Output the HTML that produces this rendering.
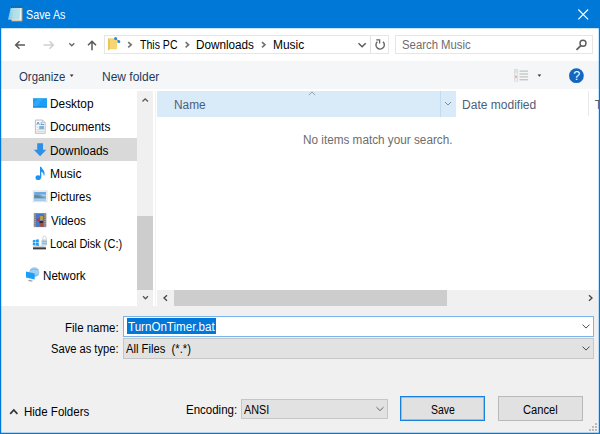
<!DOCTYPE html>
<html><head><meta charset="utf-8">
<style>
*{box-sizing:border-box;margin:0;padding:0}
html,body{width:600px;height:434px;overflow:hidden;background:#fff}
body{font-family:"Liberation Sans",sans-serif;font-size:12.5px;color:#000;position:relative}
.abs{position:absolute}
.txt{position:absolute;transform-origin:0 0;white-space:nowrap;line-height:14px;font-size:12.5px}
#ov{position:absolute;left:0;top:0}
</style></head><body>
<!-- title bar -->
<div class="abs" style="left:0;top:0;width:600px;height:28px;background:#0078d7"></div>
<!-- toolbar bg -->
<div class="abs" style="left:1px;top:61px;width:598px;height:28px;background:#f5f6f7"></div>
<!-- address box -->
<div class="abs" style="left:104px;top:35px;width:285px;height:19px;border:1px solid #e6e6e6;background:#fff"></div>
<div class="abs" style="left:370px;top:36px;width:1px;height:17px;background:#e2e2e2"></div>
<!-- search box -->
<div class="abs" style="left:395px;top:35px;width:198px;height:19px;border:1px solid #e6e6e6;background:#fff"></div>
<!-- left pane selection -->
<div class="abs" style="left:1px;top:138px;width:136px;height:23px;background:#d9d9d9"></div>
<!-- v scrollbar -->
<div class="abs" style="left:137px;top:91px;width:16px;height:215px;background:#f0f0f0"></div>
<div class="abs" style="left:137px;top:215.5px;width:16px;height:74px;background:#cdcdcd"></div>
<div class="abs" style="left:155px;top:91px;width:1px;height:215px;background:#f2f2f2"></div>
<!-- header -->
<div class="abs" style="left:157px;top:91px;width:299px;height:25.5px;background:#d9ebf9"></div>
<div class="abs" style="left:440px;top:91px;width:1px;height:25.5px;background:#c3dbee"></div>
<div class="abs" style="left:588px;top:91px;width:1px;height:25px;background:#e8e8e8"></div>
<!-- h scrollbar -->
<div class="abs" style="left:157px;top:290px;width:442px;height:16px;background:#f0f0f0"></div>
<div class="abs" style="left:174px;top:290px;width:273px;height:16px;background:#cdcdcd"></div>
<!-- bottom panel -->
<div class="abs" style="left:1px;top:306px;width:598px;height:127px;background:#f0f0f0"></div>
<!-- file name box -->
<div class="abs" style="left:123px;top:316px;width:471px;height:21px;border:1px solid #7ab4ee;background:#fff"></div>
<div class="abs" style="left:127px;top:318.3px;width:89px;height:16px;background:#0078d7"></div>
<!-- type box -->
<div class="abs" style="left:123px;top:338px;width:471px;height:20.5px;border:1px solid #c6c6c6;background:#e2e2e2"></div>
<!-- encoding box -->
<div class="abs" style="left:241px;top:398.5px;width:147px;height:20.5px;border:1px solid #c6c6c6;background:#e2e2e2"></div>
<!-- buttons -->
<div class="abs" style="left:400px;top:396px;width:85px;height:25px;border:1px solid #1a80da;box-shadow:inset 0 0 0 1px rgba(0,120,215,0.33);background:#e1e1e1"></div>
<div class="abs" style="left:498px;top:396px;width:85px;height:25px;border:1px solid #b9b9b9;background:#e1e1e1"></div>
<!-- window borders -->
<div class="abs" style="left:0;top:0;width:1px;height:434px;background:#0078d7"></div>
<div class="abs" style="left:599px;top:0;width:1px;height:434px;background:#0078d7"></div>
<div class="abs" style="left:0;top:433px;width:600px;height:1px;background:#0078d7"></div>

<div class="abs" style="left:1px;top:28px;width:1px;height:405px;background:rgba(0,120,215,0.2)"></div>
<div class="abs" style="left:598px;top:28px;width:1px;height:405px;background:rgba(0,120,215,0.2)"></div>
<div class="abs" style="left:1px;top:432px;width:598px;height:1px;background:rgba(0,120,215,0.25)"></div>
<div class="abs" style="left:1px;top:28px;width:598px;height:1px;background:rgba(0,120,215,0.22)"></div>
<svg id="ov" width="600" height="434" viewBox="0 0 600 434">
<!-- notepad icon -->
<defs><linearGradient id="flap" x1="0" y1="0" x2="1" y2="0"><stop offset="0" stop-color="#62b6e4"/><stop offset="0.45" stop-color="#a9dbe6"/><stop offset="1" stop-color="#b9e2e8"/></linearGradient></defs>
<g>
<rect x="11.6" y="8" width="10.9" height="13.5" fill="#bf9c64"/>
<rect x="11.6" y="8" width="9.9" height="12.5" fill="#f7f8f6"/>
<polygon points="10.7,7.8 20.4,7.8 20.1,14 19.6,19.8 7.9,19.8" fill="url(#flap)"/>
<path d="M10.5 9.600h9.800M10.100 11.400h10.100M9.700 13.200h10.400M9.300 15h10.700M8.900 16.800h10.900M8.500 18.600h11.200" stroke="#c6eaf0" stroke-width="0.600" opacity="0.800"/>
<path d="M11 7.300h10.800" stroke="#3d4a55" stroke-width="1.500" stroke-dasharray="1.200 0.950"/>
</g>
<!-- close X -->
<path d="M578.3 9.500L588.100 19.300M588.100 9.500L578.300 19.300" stroke="#fff" stroke-width="1.100" fill="none"/>
<!-- nav arrows -->
<path d="M19.5 41.3L15.7 45L19.5 48.7M15.7 45H25" stroke="#5a5a5a" stroke-width="1.5" fill="none"/>
<path d="M49.5 41.3L53.3 45L49.5 48.7M53.3 45H43.5" stroke="#cfcfcf" stroke-width="1.5" fill="none"/>
<path d="M69.3 43.3L71.8 45.8L74.3 43.3" stroke="#666" stroke-width="1.3" fill="none"/>
<path d="M88 45.2L92 41.4L96 45.2M92 41.6V50.3" stroke="#5a5a5a" stroke-width="1.5" fill="none"/>
<!-- address folder icon -->
<g>
<path d="M108.2 38.3h5.6l3.2 1.6v9.4h-7.3l-1.5 1.3z" fill="#f6d572"/>
<path d="M108.2 38.3l1.5 1.2v9.8l-1.5 1.3z" fill="#e9bd4d"/>
<circle cx="115.6" cy="38.4" r="1.5" fill="#2b86e0"/>
<circle cx="118.8" cy="41.4" r="1.5" fill="#2b86e0"/>
<path d="M115.6 38.4L118.8 41.4" stroke="#2b86e0" stroke-width="0.9"/>
</g>
<!-- breadcrumbs chevrons -->
<path d="M128.2 42.2L131.2 44.8L128.2 47.4" stroke="#707070" stroke-width="1.6" fill="none"/>
<path d="M185.6 42.2L188.6 44.8L185.6 47.4" stroke="#707070" stroke-width="1.6" fill="none"/>
<path d="M262 42.2L265 44.8L262 47.4" stroke="#707070" stroke-width="1.6" fill="none"/>
<!-- address dropdown chevron -->
<path d="M358.5 43.2L362.1 46.7L365.7 43.2" stroke="#5a5a5a" stroke-width="1.5" fill="none"/>
<!-- refresh -->
<path d="M383 41.8A4.2 4.2 0 1 1 377.4 41.7" stroke="#666" stroke-width="1.4" fill="none"/>
<path d="M376.2 39.9H379.6V43.4" stroke="#666" stroke-width="1.3" fill="none"/>
<!-- search icon -->
<circle cx="583" cy="43.3" r="3" stroke="#5a5a5a" stroke-width="1.4" fill="none"/>
<path d="M580.8 45.6L576.5 49.9" stroke="#5a5a5a" stroke-width="1.7"/>
<!-- toolbar carets -->
<path d="M69.8 74.6h3.8L71.7 76.9z" fill="#333"/>
<path d="M537.6 74.6h3.6L539.4 76.8z" fill="#1e2a4a"/>
<!-- view icon -->
<g>
<rect x="514.400" y="69.600" width="3.400" height="11.600" fill="#eef0f2" stroke="#cfd3d8" stroke-width="0.600"/>
<path d="M514.400 72.500h3.400M514.400 75.400h3.400M514.400 78.300h3.400" stroke="#cfd3d8" stroke-width="0.500"/>
<rect x="515.200" y="76" width="1.800" height="1.600" fill="#e8a48e"/>
<rect x="515.200" y="70.300" width="1.800" height="1.500" fill="#c9dcee"/>
<path d="M519.500 71.100h8.600M519.500 74h8.600M519.500 76.900h8.600M519.500 79.800h8.600" stroke="#b4b4b4" stroke-width="1"/>
</g>
<!-- help -->
<circle cx="576.4" cy="75.7" r="7.4" fill="#1666bf"/>
<!-- left pane icons -->
<rect x="33" y="98.2" width="14" height="9.3" fill="#1b9ff6"/>
<polygon points="38,98.200 43,98.200 37,106.600 33,106.600 33,104" fill="#3fb0fa" opacity="0.550"/><rect x="33" y="106.500" width="14" height="1" fill="#1580d0"/>
<g>
<path d="M35.400 120h7.200l2.600 2.600v10.700h-9.800z" fill="#f6f6f6" stroke="#b2b2b2" stroke-width="0.800"/><path d="M42.600 120v2.600h2.600" fill="#e2e2e2" stroke="#b2b2b2" stroke-width="0.600"/>
<path d="M36.800 124.800l1.300-2.600l1.300 2.600M40.600 123h1.600M40.600 124.600h3.400" stroke="#3b8fe0" stroke-width="0.900" fill="none"/>
<rect x="39.2" y="126" width="4.8" height="3" fill="#7fb3d6"/>
<path d="M36.6 127h2M36.6 129.6h7.4M36.6 131.4h7.4" stroke="#c9c9c9" stroke-width="0.7"/>
</g>
<path d="M37.2 143.3h5.8v6.4h3.3L40.1 156.3L33.8 149.7h3.4z" fill="#2f8fe6"/>
<g fill="#1e92f2">
<ellipse cx="38.2" cy="177.7" rx="2.7" ry="2.4"/>
<path d="M40 166.8h1.3c0.3 2.2 3.6 3.6 3.3 7.2c-0.1 1-0.4 1.6-0.8 2.2c0.3-2.6-1.2-4-2.5-4.4v6h-1.3z"/>
</g>
<g>
<rect x="33.2" y="191" width="13.8" height="10.8" fill="#fafafa" stroke="#d0d0d0" stroke-width="0.7"/>
<rect x="34.2" y="192" width="11.8" height="8.8" fill="#6fa9e2"/>
<path d="M34.200 195.200c2.500-0.800 4.500 0 6.500 1.400s3.500 1.600 5.300 1.600v0.600h-11.800z" fill="#6b8a86"/><path d="M40 194.500c2-0.600 4-0.400 6 0.200v1.800c-2 0-4-0.800-6-2z" fill="#b9d6ef" opacity="0.800"/>
<rect x="34.2" y="198.400" width="11.800" height="2.400" fill="#a9d0ee"/>
</g>
<g>
<rect x="33.800" y="213.200" width="12.500" height="13.900" fill="#7b7b7b"/>
<rect x="36.200" y="213.800" width="7.700" height="12.700" fill="#3f78d6"/>
<path d="M35 214.500v12M45.100 214.500v12" stroke="#cfcfcf" stroke-width="1" stroke-dasharray="1 1.200"/>
<rect x="40.200" y="216" width="2.600" height="4.500" fill="#d8a21a"/>
<rect x="36.800" y="218.500" width="3" height="2.500" fill="#c8323c"/>
<rect x="39.500" y="221" width="3.500" height="2.200" fill="#3a2a30"/>
<rect x="40.200" y="223.500" width="2.800" height="3" fill="#b8452a"/>
</g>
<g>
<path d="M33 245.500h10.500l2.500 1.500v3h-13z" fill="#d4d4d4"/>
<rect x="33" y="247.400" width="13" height="1.800" fill="#3c3c3c"/>
<path d="M32.800 240.200l2.600-0.400v2.600h-2.600zM35.900 239.700l2.900-0.400v3.100h-2.900zM32.800 242.900h2.600v2.500l-2.600-0.300zM35.900 242.900h2.900v3l-2.900-0.400z" fill="#1b9ff6"/>
<rect x="41.600" y="239.500" width="5.400" height="6" rx="0.800" fill="#b9cfe0"/>
<path d="M42.800 239.700v-1.800a1.700 1.700 0 0 1 3.400 0v1.800" stroke="#c9d4dc" stroke-width="1" fill="none"/>
<path d="M41.600 241.500h5.400M41.600 243.500h5.400" stroke="#8fb0c8" stroke-width="0.700"/>
</g>
<g>
<circle cx="34.300" cy="272.300" r="5" fill="#9fd0f2"/>
<path d="M30 270.500c2-1.500 5-2 8.500-0.500M31 275c2 1 5 1 7.500-0.500" stroke="#6fb2e0" stroke-width="0.800" fill="none"/>
<path d="M26 271.600l8.700 1.800v6l-8.700-1.800z" fill="#1b9ff6"/>
<path d="M29 279.800l3.500 0.800v1.200l-4.500-0.900z" fill="#9aa4ad"/>
</g>
<!-- scroll chevrons -->
<path d="M142.500 101.500L145.200 98.800L147.900 101.500" stroke="#555" stroke-width="1.300" fill="none"/>
<path d="M143 296.200L145.500 298.800L148 296.200" stroke="#555" stroke-width="1.300" fill="none"/>
<path d="M167 295.300L164 298L167 300.700" stroke="#444" stroke-width="1.300" fill="none"/>
<path d="M589 295.300L592 298L589 300.700" stroke="#444" stroke-width="1.300" fill="none"/>
<!-- header chevrons -->
<path d="M308.800 95L312 92L315.200 95" stroke="#8a8a8a" stroke-width="0.800" fill="none"/>
<path d="M445 102L448 105L451 102" stroke="#6f849a" stroke-width="0.900" fill="none"/>
<!-- combo chevrons -->
<path d="M582.500 324.600L586 328.100L589.500 324.600" stroke="#4a4a4a" stroke-width="1" fill="none"/>
<path d="M582.500 346.600L586 350.100L589.500 346.600" stroke="#4a4a4a" stroke-width="1" fill="none"/>
<path d="M376.500 407.200L380 410.600L383.500 407.200" stroke="#555" stroke-width="0.900" fill="none"/>
<!-- hide folders chevron -->
<path d="M10.200 413.800L13.800 410L17.400 413.800" stroke="#333" stroke-width="1.700" fill="none"/>
<!-- resize grip -->
<g fill="#bdbdbd">
<rect x="595" y="423" width="2" height="2"/><rect x="592" y="426" width="2" height="2"/><rect x="595" y="426" width="2" height="2"/>
<rect x="589" y="429" width="2" height="2"/><rect x="592" y="429" width="2" height="2"/><rect x="595" y="429" width="2" height="2"/>
</g>
</svg>
<div class="txt" style="left:573.300px;top:68.600px;font-size:12.500px;color:#fff">?</div>
<div class="txt" style="left:25.50px;top:8.00px;color:#fff;transform:scaleX(0.8596);">Save As</div>
<div class="txt" style="left:139.50px;top:38.00px;color:#000;transform:scaleX(0.8441);">This PC</div>
<div class="txt" style="left:196.06px;top:38.00px;color:#000;transform:scaleX(0.9374);">Downloads</div>
<div class="txt" style="left:272.84px;top:38.00px;color:#000;transform:scaleX(0.9557);">Music</div>
<div class="txt" style="left:401.50px;top:38.00px;color:#6d6d6d;transform:scaleX(0.9076);">Search Music</div>
<div class="txt" style="left:18.70px;top:70.00px;color:#1e395b;transform:scaleX(0.9120);">Organize</div>
<div class="txt" style="left:102.04px;top:70.00px;color:#1e395b;transform:scaleX(0.9593);">New folder</div>
<div class="txt" style="left:49.75px;top:97.00px;color:#000;transform:scaleX(0.9487);">Desktop</div>
<div class="txt" style="left:49.74px;top:120.00px;color:#000;transform:scaleX(0.9553);">Documents</div>
<div class="txt" style="left:49.75px;top:144.00px;color:#000;transform:scaleX(0.9457);">Downloads</div>
<div class="txt" style="left:49.73px;top:167.00px;color:#000;transform:scaleX(0.9652);">Music</div>
<div class="txt" style="left:49.79px;top:190.00px;color:#000;transform:scaleX(0.9111);">Pictures</div>
<div class="txt" style="left:50.70px;top:214.00px;color:#000;transform:scaleX(0.9167);">Videos</div>
<div class="txt" style="left:49.82px;top:237.00px;color:#000;transform:scaleX(0.8812);">Local Disk (C:)</div>
<div class="txt" style="left:43.27px;top:269.00px;color:#000;transform:scaleX(0.9300);">Network</div>
<div class="txt" style="left:173.55px;top:98.00px;color:#4c607a;transform:scaleX(0.9478);">Name</div>
<div class="txt" style="left:461.74px;top:98.00px;color:#4c607a;transform:scaleX(0.9623);">Date modified</div>
<div class="txt" style="left:594.70px;top:98.00px;color:#4c607a;transform:scaleX(1.0000);">T</div>
<div class="txt" style="left:302.96px;top:133.00px;color:#6d6d6d;transform:scaleX(0.9397);">No items match your search.</div>
<div class="txt" style="left:65.08px;top:321.00px;color:#000;transform:scaleX(0.9194);">File name:</div>
<div class="txt" style="left:127.80px;top:320.00px;color:#fff;transform:scaleX(0.9269);">TurnOnTimer.bat</div>
<div class="txt" style="left:51.20px;top:342.00px;color:#000;transform:scaleX(0.8915);">Save as type:</div>
<div class="txt" style="left:125.60px;top:342.00px;color:#000;transform:scaleX(0.8992);">All Files&nbsp; (*.*)</div>
<div class="txt" style="left:23.98px;top:405.00px;color:#000;transform:scaleX(0.9208);">Hide Folders</div>
<div class="txt" style="left:185.78px;top:403.00px;color:#000;transform:scaleX(0.9201);">Encoding:</div>
<div class="txt" style="left:243.70px;top:403.00px;color:#000;transform:scaleX(0.8641);">ANSI</div>
<div class="txt" style="left:430.60px;top:403.00px;color:#000;transform:scaleX(0.8409);">Save</div>
<div class="txt" style="left:523.00px;top:403.00px;color:#000;transform:scaleX(0.8916);">Cancel</div>
</body></html>
